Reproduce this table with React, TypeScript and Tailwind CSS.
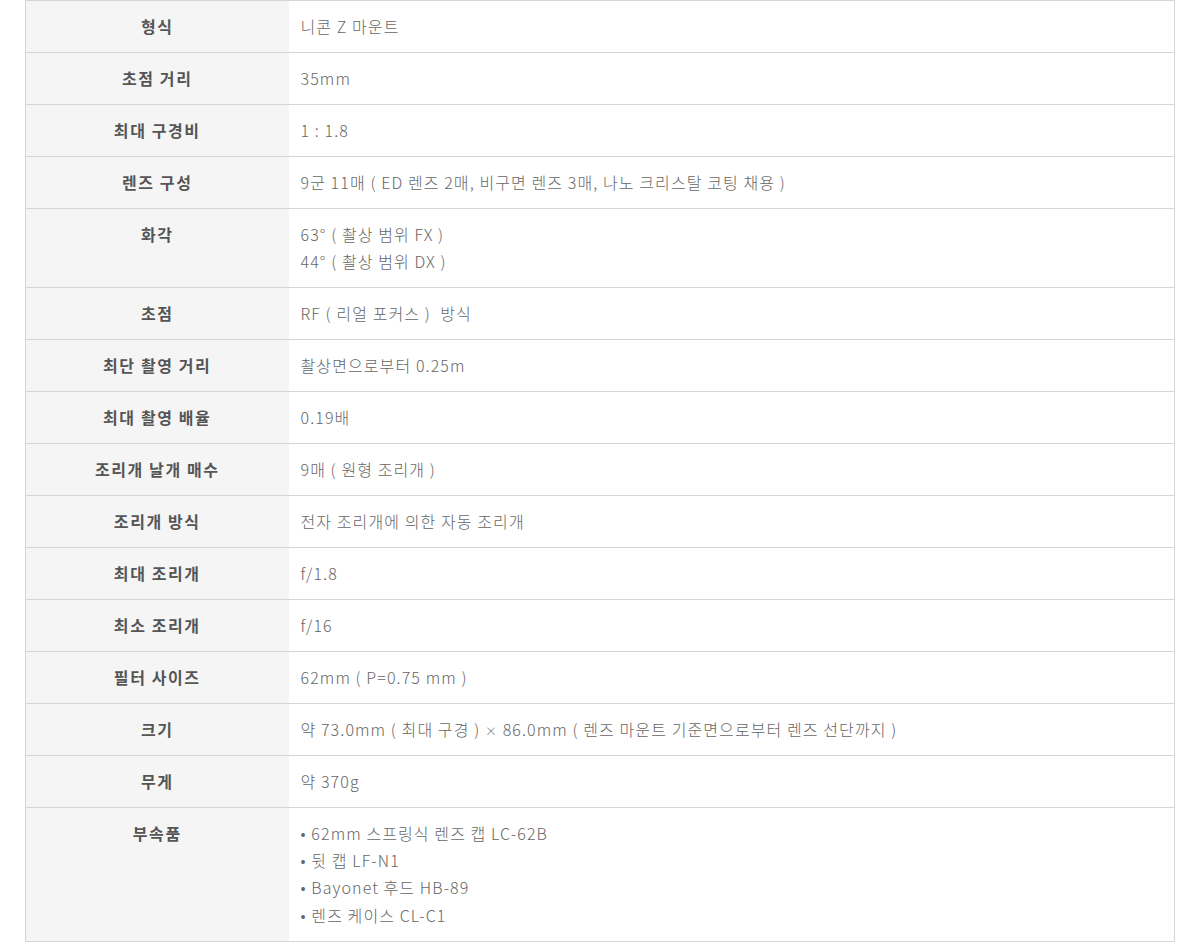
import type { ReactNode } from "react";

const rows: { label: string; lines: ReactNode[]; list?: boolean }[] = [
  { label: "형식", lines: ["니콘 Z 마운트"] },
  { label: "초점 거리", lines: ["35mm"] },
  { label: "최대 구경비", lines: ["1 : 1.8"] },
  { label: "렌즈 구성", lines: ["9군 11매 ( ED 렌즈 2매, 비구면 렌즈 3매, 나노 크리스탈 코팅 채용 )"] },
  { label: "화각", lines: ["63° ( 촬상 범위 FX )", "44° ( 촬상 범위 DX )"] },
  { label: "초점", lines: ["RF ( 리얼 포커스 )  방식"] },
  { label: "최단 촬영 거리", lines: ["촬상면으로부터 0.25m"] },
  { label: "최대 촬영 배율", lines: ["0.19배"] },
  { label: "조리개 날개 매수", lines: ["9매 ( 원형 조리개 )"] },
  { label: "조리개 방식", lines: ["전자 조리개에 의한 자동 조리개"] },
  { label: "최대 조리개", lines: ["f/1.8"] },
  { label: "최소 조리개", lines: ["f/16"] },
  { label: "필터 사이즈", lines: ["62mm ( P=0.75 mm )"] },
  {
    label: "크기",
    lines: [
      <>
        약 73.0mm ( 최대 구경 ) <span className="text-[12px] leading-none">×</span> 86.0mm ( 렌즈 마운트 기준면으로부터 렌즈 선단까지 )
      </>,
    ],
  },
  { label: "무게", lines: ["약 370g"] },
  {
    label: "부속품",
    lines: ["62mm 스프링식 렌즈 캡 LC-62B", "뒷 캡 LF-N1", "Bayonet 후드 HB-89", "렌즈 케이스 CL-C1"],
    list: true,
  },
];

export default function App() {
  return (
    <div className="bg-white px-[25px] min-h-[942px] font-['Noto_Sans_CJK_KR','Noto_Sans',sans-serif] text-[16px]">
      <table className="w-full border-collapse border border-[#d6d6d6]">
        <tbody>
          {rows.map((row) => (
            <tr key={row.label} className="border-b border-[#d6d6d6] align-top">
              <th className="w-[263px] bg-[#f5f5f5] text-[#555] font-semibold text-center pt-[12px] pb-[12px] leading-[27px] tracking-[1.6px] whitespace-pre">
                {row.label}
              </th>
              <td className="pl-[12px] pt-[12px] pb-[12px] text-[#666] font-light leading-[27px] tracking-[1.1px] whitespace-pre">
                {row.list ? (
                  <ul className="leading-[27.2px]">
                    {row.lines.map((l, i) => (
                      <li key={i}>• {l}</li>
                    ))}
                  </ul>
                ) : (
                  row.lines.map((l, i) => <div key={i}>{l}</div>)
                )}
              </td>
            </tr>
          ))}
        </tbody>
      </table>
    </div>
  );
}
